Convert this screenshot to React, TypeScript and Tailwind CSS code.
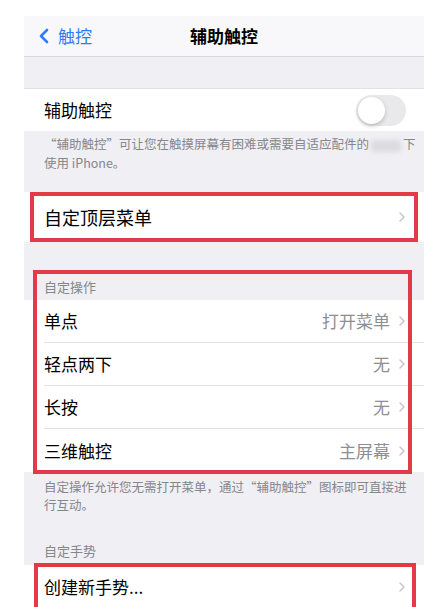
import { ChevronLeft, ChevronRight } from "lucide-react";

const font = { fontFamily: '"Noto Sans CJK SC", "Noto Sans", sans-serif' };

function Chevron() {
  return <ChevronRight className="w-[16px] h-[16px] text-[#c4c4c8]" strokeWidth={2} />;
}

function Row({ label, value, last }: { label: string; value?: string; last?: boolean }) {
  return (
    <div className="flex items-center h-[43px] pl-[20px] bg-white">
      <div className={`flex flex-1 items-center h-full pr-[14px] ${last ? "" : "border-b border-[#e2e2e6]"}`}>
        <span className="flex-1 text-[17px] text-black">{label}</span>
        {value && <span className="text-[17px] text-[#8e8e93] mr-[4px]">{value}</span>}
        <Chevron />
      </div>
    </div>
  );
}

export default function App() {
  return (
    <div className="w-[445px] h-[607px] bg-white pt-[16px] px-[24px] overflow-hidden" style={font}>
      <div className="w-[400px] h-[591px] bg-[#efeff4] flex flex-col">
        {/* nav */}
        <div className="relative flex items-center h-[41px] bg-[#f8f8fa] border-b border-[#d8d8dc] shrink-0">
          <div className="flex items-center pl-[8px] text-[#2f7cf6]">
            <ChevronLeft className="w-[24px] h-[24px]" strokeWidth={2.6} />
            <span className="text-[17px] ml-[2px]">触控</span>
          </div>
          <div className="absolute inset-0 flex items-center justify-center pointer-events-none">
            <span className="text-[17px] font-semibold text-black">辅助触控</span>
          </div>
        </div>

        <div className="h-[32px] shrink-0 border-b border-[#e2e2e6]" />

        <div className="flex items-center h-[42px] pl-[20px] pr-[18px] bg-white shrink-0">
          <span className="flex-1 text-[17px] text-black">辅助触控</span>
          <div className="w-[50px] h-[31px] rounded-full bg-[#e9e9eb] p-[2px] flex">
            <div className="w-[27px] h-[27px] rounded-full bg-white shadow-[0_2px_4px_rgba(0,0,0,0.2)]" />
          </div>
        </div>

        <div className="pl-[20px] pt-[3px] text-[12.5px] leading-[19px] text-[#86868b] whitespace-nowrap shrink-0">
          “辅助触控”可让您在触摸屏幕有困难或需要自适应配件的
          <span className="inline-block align-middle w-[30px] h-[12px] mx-[2px] rounded bg-[#dcdce0] blur-[2px]" />
          下<br />
          使用 iPhone。
        </div>

        <div className="h-[20px] shrink-0" />

        <div className="relative shrink-0">
          <div className="flex items-center h-[50px] pl-[20px] pr-[14px] bg-white">
            <span className="flex-1 text-[18px] text-black">自定顶层菜单</span>
            <Chevron />
          </div>
          <div className="absolute left-[6px] right-[6px] top-0 bottom-0 border-[4px] border-[#e23a47]" />
        </div>

        <div className="relative shrink-0">
          <div className="pt-[36px] pb-[5px] px-[20px] text-[13px] leading-[17px] text-[#86868b]">自定操作</div>
          <Row label="单点" value="打开菜单" />
          <Row label="轻点两下" value="无" />
          <Row label="长按" value="无" />
          <Row label="三维触控" value="主屏幕" last />
          <div className="absolute left-[9px] right-[12px] top-[28px] -bottom-[2px] border-[4px] border-[#e23a47]" />
        </div>

        <div className="pl-[20px] pt-[6px] text-[12.5px] leading-[18px] text-[#86868b] whitespace-nowrap shrink-0">
          自定操作允许您无需打开菜单，通过“辅助触控”图标即可直接进
          <br />
          行互动。
        </div>

        <div className="pt-[28px] pb-[6px] px-[20px] text-[13px] leading-[17px] text-[#86868b] shrink-0">自定手势</div>

        <div className="relative shrink-0">
          <div className="flex items-center h-[44px] pl-[20px] pr-[14px] bg-white">
            <span className="flex-1 text-[17px] text-black">创建新手势...</span>
            <Chevron />
          </div>
          <div className="absolute left-[10px] right-[8px] -top-[2px] -bottom-[2px] border-[4px] border-[#e23a47]" />
        </div>
      </div>
    </div>
  );
}
